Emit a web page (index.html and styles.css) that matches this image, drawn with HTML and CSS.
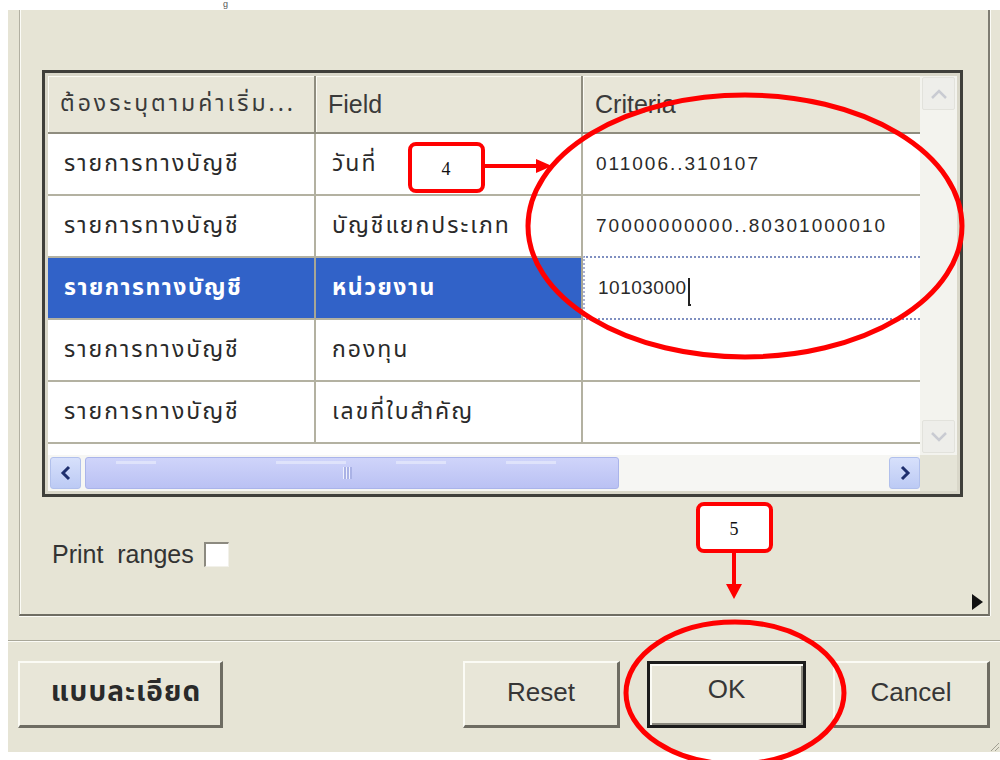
FILE: index.html
```html
<!DOCTYPE html>
<html lang="th">
<head>
<meta charset="utf-8">
<title>Filter</title>
<link rel="stylesheet" href="styles.css">
</head>
<body>
<div class="screen">
  <div class="topstrip"><span class="cut">g</span></div>
  <div class="dialog">
    <div class="group">
      <div class="table-frame">
        <div class="grid-area">
          <div class="grid">
            <div class="hcell th">ต้องระบุตามค่าเริ่ม...</div>
            <div class="hcell">Field</div>
            <div class="hcell last">Criteria</div>

            <div class="cell th">รายการทางบัญชี</div>
            <div class="cell th">วันที่</div>
            <div class="cell crit last">011006..310107</div>

            <div class="cell th">รายการทางบัญชี</div>
            <div class="cell th">บัญชีแยกประเภท</div>
            <div class="cell crit last">70000000000..80301000010</div>

            <div class="cell th sel">รายการทางบัญชี</div>
            <div class="cell th sel">หน่วยงาน</div>
            <div class="cell crit last editing">10103000<span class="caret"></span></div>

            <div class="cell th">รายการทางบัญชี</div>
            <div class="cell th">กองทุน</div>
            <div class="cell crit last"></div>

            <div class="cell th">รายการทางบัญชี</div>
            <div class="cell th">เลขที่ใบสำคัญ</div>
            <div class="cell crit last"></div>
          </div>
          <div class="vscroll">
            <div class="vbtn">
              <svg width="18" height="12" viewBox="0 0 18 12"><polyline points="2,10 9,3 16,10" fill="none" stroke="#c9cbd2" stroke-width="2.5"/></svg>
            </div>
            <div class="vtrack"></div>
            <div class="vbtn">
              <svg width="18" height="12" viewBox="0 0 18 12"><polyline points="2,2 9,9 16,2" fill="none" stroke="#c9cbd2" stroke-width="2.5"/></svg>
            </div>
          </div>
          <div class="hscroll">
            <div class="hbtn">
              <svg width="12" height="16" viewBox="0 0 12 16"><polyline points="9,2 3,8 9,14" fill="none" stroke="#1f2f6e" stroke-width="3"/></svg>
            </div>
            <div class="thumb"><span class="grip-lines"></span></div>
            <div class="htrack"></div>
            <div class="hbtn">
              <svg width="12" height="16" viewBox="0 0 12 16"><polyline points="3,2 9,8 3,14" fill="none" stroke="#1f2f6e" stroke-width="3"/></svg>
            </div>
          </div>
          <div class="corner"></div>
        </div>
      </div>
      <label class="print-row">Print&nbsp; ranges <span class="checkbox"></span></label>
      <div class="group-foot"><span class="more"></span></div>
    </div>
    <div class="separator"></div>
    <div class="buttons">
      <button class="btn th detail">แบบละเอียด</button>
      <span class="spacer"></span>
      <button class="btn">Reset</button>
      <button class="btn default">OK</button>
      <button class="btn">Cancel</button>
    </div>
    <svg class="resize" width="12" height="12" viewBox="0 0 12 12">
      <line x1="11" y1="3" x2="3" y2="11" stroke="#a19f92" stroke-width="1"/>
      <line x1="11" y1="7" x2="7" y2="11" stroke="#a19f92" stroke-width="1"/>
    </svg>
  </div>

  <svg class="marks" width="1000" height="760" viewBox="0 0 1000 760">
    <ellipse cx="745" cy="226" rx="217" ry="131" fill="none" stroke="#f00" stroke-width="5"/>
    <rect x="410" y="144" width="73" height="47" rx="6" fill="#fff" stroke="#f00" stroke-width="4"/>
    <text x="446" y="175" class="mark-num">4</text>
    <line x1="483" y1="166" x2="538" y2="166" stroke="#f00" stroke-width="4"/>
    <polygon points="536,159 552,166 536,173" fill="#f00"/>

    <rect x="698" y="504" width="73" height="47" rx="6" fill="#fff" stroke="#f00" stroke-width="4"/>
    <text x="734" y="535" class="mark-num">5</text>
    <line x1="734" y1="551" x2="734" y2="586" stroke="#f00" stroke-width="4"/>
    <polygon points="726,584 734,599 742,584" fill="#f00"/>

    <ellipse cx="735" cy="693" rx="109" ry="71" fill="none" stroke="#f00" stroke-width="5"/>
  </svg>
</div>
</body>
</html>
```

FILE: styles.css
```css
* { box-sizing: border-box; }

html, body {
  margin: 0;
  padding: 0;
  background: #fff;
}

.screen {
  position: relative;
  width: 1000px;
  height: 760px;
  overflow: hidden;
  background: #fff;
  font-family: "Liberation Sans", Arial, sans-serif;
  color: #333;
}

.th {
  font-family: Tahoma, "Noto Sans Thai", "Noto Sans Thai UI", Loma, Garuda, "Noto Sans", sans-serif;
}

/* white strip with the tail of a line above the dialog */
.topstrip {
  height: 10px;
  overflow: hidden;
  padding-left: 223px;
}
.cut {
  display: block;
  font-size: 9px;
  line-height: 8px;
  color: #555;
}

.dialog {
  position: relative;
  margin-left: 8px;
  height: 742px;
  background: #e6e4d5;
  display: flex;
  flex-direction: column;
}

/* etched group box, its top runs off above */
.group {
  height: 606px;
  margin-left: 11px;
  margin-right: 10px;
  border-left: 1px solid #b2b0a2;
  border-right: 2px solid #7e7c72;
  border-bottom: 2px solid #6f6d63;
  box-shadow: inset 1px 0 #fbfbf6, 1px 0 #fbfbf6, 0 1px #fbfbf6;
  padding: 60px 0 0 22px;
  display: flex;
  flex-direction: column;
}

.table-frame {
  width: 921px;
  height: 427px;
  border: 3px solid #3f3f3a;
  padding: 3px;
  background: #d9d7c9;
}

.grid-area {
  display: grid;
  grid-template-columns: 872px 37px;
  grid-template-rows: 379px 36px;
  width: 909px;
  height: 415px;
}

.grid {
  display: grid;
  grid-template-columns: 268px 267px 337px;
  grid-template-rows: 58px repeat(5, 62px);
  align-content: start;
  background: #fefefe;
}

.hcell {
  background: #e8e6d8;
  border-right: 2px solid #8f8d7f;
  border-bottom: 2px solid #8f8d7f;
  box-shadow: inset 1px 1px #fbfbf4;
  display: flex;
  align-items: center;
  padding-left: 12px;
  font-size: 25px;
  color: #3a3a3a;
  white-space: nowrap;
  overflow: hidden;
}
.hcell.th {
  font-size: 23px;
  letter-spacing: 3px;
}
.hcell.last { border-right: none; }

.cell {
  border-right: 2px solid #b3b1a1;
  border-bottom: 2px solid #b3b1a1;
  display: flex;
  align-items: center;
  padding-left: 16px;
  font-size: 23px;
  letter-spacing: 2px;
  color: #2a2a2a;
  background: #fff;
  white-space: nowrap;
}
.cell.last { border-right: none; }

.cell.sel {
  background: #3162c8;
  color: #fff;
  font-weight: bold;
  letter-spacing: 1.5px;
  border-right-color: #a7a695;
}

.crit {
  font-family: "Liberation Sans", Arial, sans-serif;
  font-size: 19px;
  letter-spacing: 2px;
  padding-left: 13px;
}

.cell.editing {
  border-top: 2px dotted #7f8fc0;
  border-bottom: 2px dotted #7f8fc0;
  border-left: 2px dotted #a8b0d4;
  padding-left: 13px;
  letter-spacing: 0.5px;
  margin-top: -2px;
}
.caret {
  display: inline-block;
  width: 3px;
  height: 28px;
  margin-left: 1px;
  margin-top: 8px;
  border-left: 2px solid #222;
  border-bottom: 2px solid #222;
}

/* vertical scroll bar, disabled look */
.vscroll {
  display: flex;
  flex-direction: column;
  background: #f3f3ee;
  padding: 1px 2px 2px 2px;
}
.vbtn {
  height: 33px;
  display: flex;
  align-items: center;
  justify-content: center;
  background: #eeeeea;
  border: 1px solid #e2e2dc;
  border-radius: 2px;
}
.vtrack { flex: 1; }

/* horizontal scroll bar */
.hscroll {
  display: flex;
  align-items: stretch;
  gap: 4px;
  background: #f6f6f3;
  padding: 2px 0 2px 2px;
}
.hbtn {
  width: 31px;
  display: flex;
  align-items: center;
  justify-content: center;
  background: linear-gradient(#d7e0fb, #bccaf4);
  border: 1px solid #b1c0ec;
  border-radius: 3px;
}
.thumb {
  width: 534px;
  position: relative;
  background:
    linear-gradient(90deg, transparent 0 30px, #dfe3fb 30px 70px, transparent 70px 190px, #dfe3fb 190px 260px, transparent 260px 310px, #dfe3fb 310px 360px, transparent 360px 420px, #dfe3fb 420px 470px, transparent 470px) top 3px left 0 / 100% 3px no-repeat,
    linear-gradient(#cfd4fa, #bac1f3);
  border: 1px solid #aab4ea;
  border-radius: 3px;
  display: flex;
  align-items: center;
  justify-content: center;
}
.grip-lines {
  width: 9px;
  height: 12px;
  margin-left: -10px;
  background: repeating-linear-gradient(90deg, #eef0fd 0 1px, #aab2e6 1px 3px);
}
.htrack { flex: 1; }

.corner { background: #e5e4d7; }

.print-row {
  display: flex;
  align-items: center;
  margin-top: 43px;
  padding-left: 10px;
  font-size: 25px;
  color: #333;
}
.checkbox {
  width: 25px;
  height: 25px;
  margin-left: 10px;
  background: #fff;
  border-top: 2px solid #8c8a80;
  border-left: 2px solid #8c8a80;
  border-right: 1px solid #f2f1ea;
  border-bottom: 1px solid #f2f1ea;
}

.group-foot {
  margin-top: auto;
  display: flex;
  justify-content: flex-end;
  padding: 0 5px 4px 0;
}
.more {
  width: 0;
  height: 0;
  border-top: 8px solid transparent;
  border-bottom: 8px solid transparent;
  border-left: 11px solid #111;
}

.separator {
  margin-top: 24px;
  height: 2px;
  border-top: 1px solid #a9a799;
  border-bottom: 1px solid #fbfbf6;
}

.buttons {
  display: flex;
  align-items: flex-start;
  gap: 27px;
  margin-top: 19px;
  padding: 0 10px 0 10px;
}
.spacer { flex: 1; }

.btn {
  width: 157px;
  height: 67px;
  padding: 0 0 4px 0;
  background: #e8e6d8;
  border-top: 2px solid #fbfbf5;
  border-left: 2px solid #fbfbf5;
  border-right: 3px solid #6e6c62;
  border-bottom: 3px solid #6e6c62;
  font-family: "Liberation Sans", Arial, sans-serif;
  font-size: 26px;
  color: #363636;
}
.btn.detail {
  width: 205px;
  padding-left: 12px;
  font-size: 28px;
  font-weight: bold;
  letter-spacing: 1px;
  color: #2a2a2a;
  font-family: Tahoma, "Noto Sans Thai", "Noto Sans Thai UI", Loma, Garuda, "Noto Sans", sans-serif;
}
.btn.default {
  width: 159px;
  border: 3px solid #1c1c1c;
  box-shadow: inset 2px 2px #fbfbf5, inset -2px -2px #8a887e;
  padding-bottom: 10px;
}

.resize {
  position: absolute;
  right: 0;
  bottom: 0;
}

/* red call-outs drawn over the dialog */
.marks {
  position: absolute;
  left: 0;
  top: 0;
  pointer-events: none;
}
.mark-num {
  font-family: "Liberation Serif", "Times New Roman", serif;
  font-size: 18px;
  fill: #111;
  text-anchor: middle;
}
```
